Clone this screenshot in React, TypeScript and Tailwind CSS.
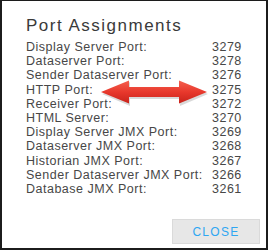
const ports: [string, number][] = [
  ['Display Server Port:', 3279],
  ['Dataserver Port:', 3278],
  ['Sender Dataserver Port:', 3276],
  ['HTTP Port:', 3275],
  ['Receiver Port:', 3272],
  ['HTML Server:', 3270],
  ['Display Server JMX Port:', 3269],
  ['Dataserver JMX Port:', 3268],
  ['Historian JMX Port:', 3267],
  ['Sender Dataserver JMX Port:', 3266],
  ['Database JMX Port:', 3261],
]

function DoubleArrow() {
  return (
    <svg
      width="112"
      height="28"
      viewBox="0 0 112 28"
      className="absolute left-[97px] top-[78px]"
    >
      <defs>
        <linearGradient id="arrowFill" x1="0" y1="0" x2="0" y2="1">
          <stop offset="0" stopColor="#f4604f" />
          <stop offset="0.5" stopColor="#e8382c" />
          <stop offset="1" stopColor="#c8231b" />
        </linearGradient>
      </defs>
      {/* soft shadow */}
      <path
        d="M3 15 L31 3 L31 10 L81 10 L81 3 L109 15 L81 27 L81 20 L31 20 L31 27 Z"
        fill="#000"
        opacity="0.15"
      />
      <path
        d="M2 13 L30 1.5 L30 8 L80 8 L80 1.5 L108 13 L80 24.5 L80 18 L30 18 L30 24.5 Z"
        fill="url(#arrowFill)"
      />
    </svg>
  )
}

export default function App() {
  return (
    <div className="relative w-[268px] h-[250px] bg-white border-t border-l-2 border-r-2 border-b-2 border-[#1c1c1c] flex flex-col font-['Liberation_Sans',Arial,sans-serif]">
      <div className="pl-6 pt-[15px]">
        <h1 className="text-[17px] leading-[20px] tracking-[1.5px] text-[#3a3a3a]">
          Port Assignments
        </h1>
        <div className="mt-[4px] grid grid-cols-[186px_auto] text-[12.5px] leading-[14.2px] tracking-[0.5px] text-[#474747]">
          {ports.map(([label, port]) => (
            <div key={label} className="contents">
              <span className="whitespace-nowrap">{label}</span>
              <span>{port}</span>
            </div>
          ))}
        </div>
      </div>

      <div className="flex-1" />

      <div className="flex justify-end pr-[6px] pb-[4px]">
        <button className="w-[88px] h-[25px] bg-[#e7e7e7] border border-[#dadada] text-[#2ea6f2] text-[12px] tracking-[1.3px]">
          CLOSE
        </button>
      </div>

      <DoubleArrow />
    </div>
  )
}
